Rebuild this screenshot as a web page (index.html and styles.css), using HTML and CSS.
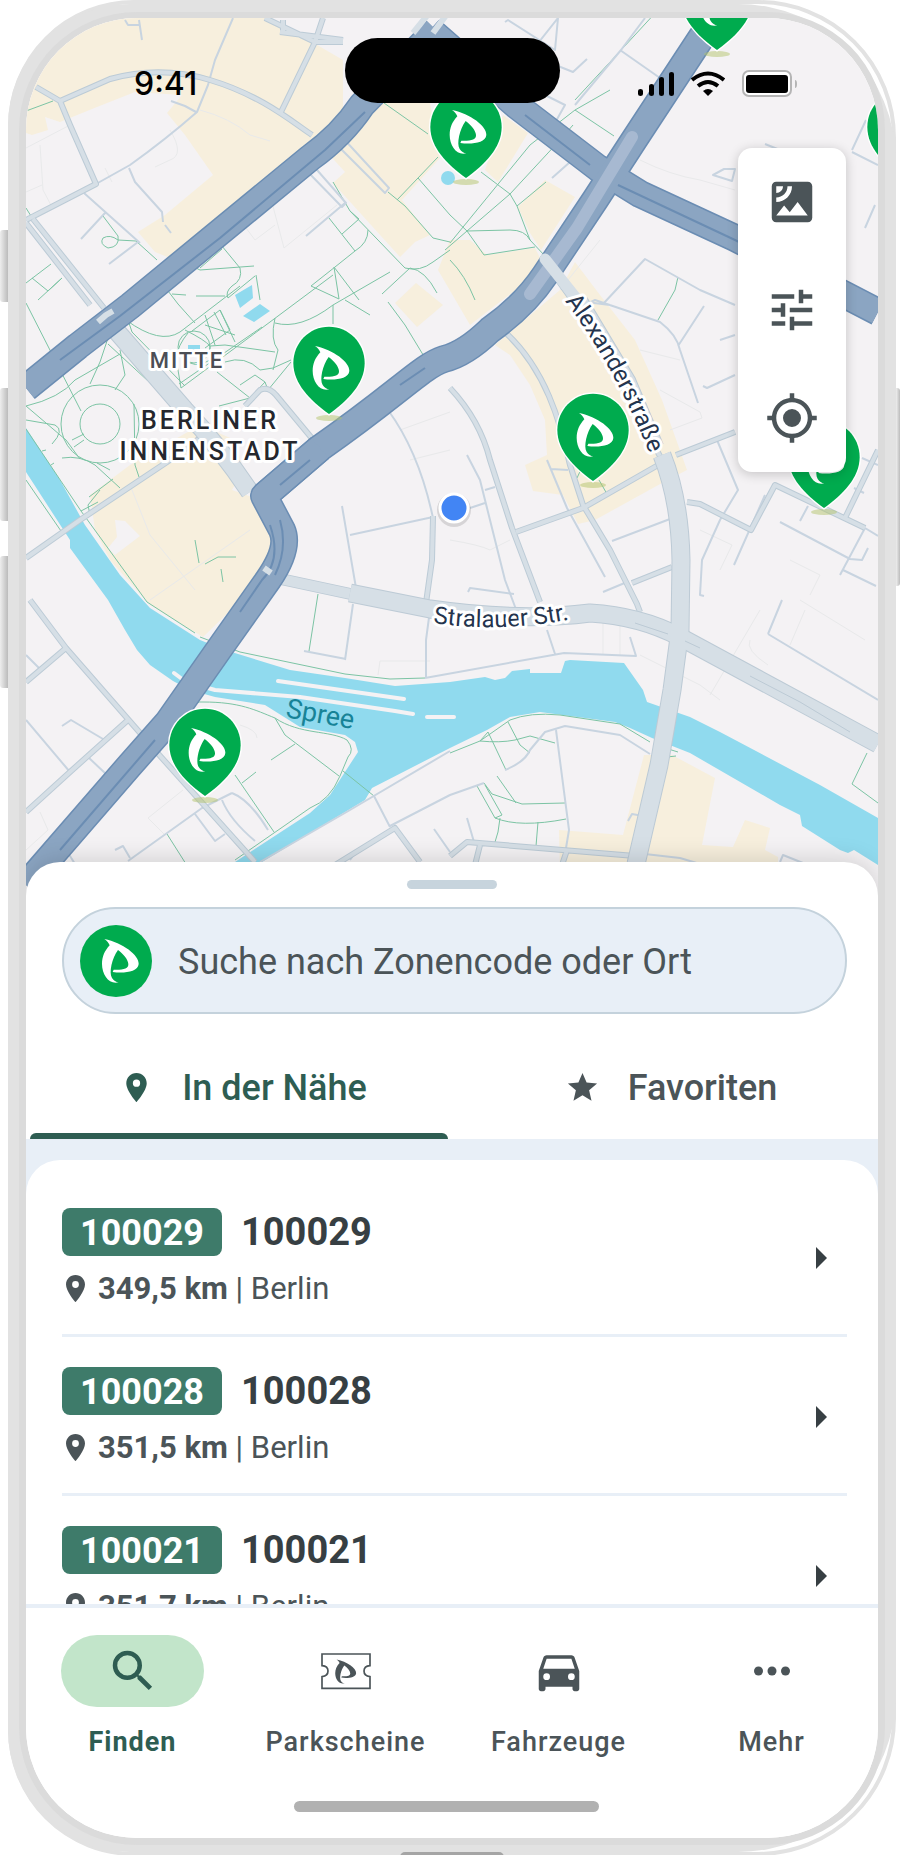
FILE: index.html
```html
<!DOCTYPE html>
<html lang="de">
<head>
    <meta charset="UTF-8">
    <meta name="viewport" content="width=device-width, initial-scale=1.0">
    <title>Parken in der Nähe</title>
    <link rel="stylesheet" href="styles.css">
</head>
<body>

    <svg class="sprite" aria-hidden="true">
        <defs>
            <path id="logo" d="M945 137C1000 148 1050 186 1048 212C1046 238 1000 240 970 236L973 229C1002 230 1018 226 1017 212C1016 198 1002 182 986 170C968 194 958 238 968 254C973 262 980 266 988 267C960 275 938 245 938 212C938 190 946 172 961 156C958 148 952 142 945 137Z"/>
            <g id="pin">
                <ellipse class="pin-shadow" cx="0" cy="4" rx="13" ry="3"/>
                <g transform="scale(.3333) translate(-987 -341)">
                    <path class="pin-body" d="M987 341C930 300 880 250 880 188C880 127 928 79 987 79C1046 79 1094 127 1094 188C1094 250 1044 300 987 341Z"/>
                    <use href="#logo" fill="#fff"/>
                </g>
            </g>
            <path id="place" d="M12 2C8.1 2 5 5.1 5 9c0 5.2 7 13 7 13s7-7.800 7-13c0-3.900-3.100-7-7-7zm0 9.500a2.500 2.500 0 1 1 0-5 2.500 2.500 0 0 1 0 5z"/>
            <path id="hw1" d="M436 30L362 105Q342 135 310 158L130 306L78 346L26 388"/>
            <path id="hw2" d="M430 30L517 106L598 168L640 194L735 238L878 312"/>
            <path id="hw3" d="M703 35L655 108L634 140L595 200L545 275Q525 305 490 330Q465 354 444 359C422 366 400 392 320 448L264 496"/>
            <path id="hw4" d="M320 448L264 496L282 530Q290 548 268 580L222 645L168 722L130 765L26 885"/>
            <path id="st1" d="M113 327L185 410Q220 447 250 492"/>
            <path id="st3" d="M350 593L430 609Q520 622 590 613Q640 616 680 637L878 744"/>
            <path id="st4" d="M662 455Q680 500 681 560L680 630L672 690L659 765L636 864"/>
            <path id="alex" d="M565 301Q614 366 648 450"/>
            <path id="stral" d="M433 623Q500 633 572 619"/>
        </defs>
    </svg>

    <div class="phone">
        <span class="side-button mute"></span>
        <span class="side-button volume-up"></span>
        <span class="side-button volume-down"></span>
        <span class="side-button power"></span>

        <main class="screen">
            <section class="map">
                <svg class="map-canvas" viewBox="26 18 852 890" role="img" aria-label="Karte von Berlin">
                    <rect x="26" y="18" width="852" height="890" fill="#f4f2f4"/>

                    <!-- built-up areas -->
                    <g class="area">
                        <path d="M26 18H265L300 35L343 60V108L320 140L180 262L155 252L138 232L165 215L213 175L185 135L167 113L182 95L135 92L97 107L60 122L45 117L48 130L32 135L26 133Z"/>
                        <path d="M325 150L375 103H430L440 158L402 200L430 235L415 242L400 257L333 183L345 172Z"/>
                        <path d="M503 115L528 133L498 182L485 170Z"/>
                        <path d="M545 180L575 197L541 250L530 233L518 207Z"/>
                        <path d="M438 270L450 240H470L487 255L535 248L545 268L505 298L470 325Z"/>
                        <path d="M395 303L416 283L443 305L417 327Z"/>
                        <path d="M495 345L560 290L575 262L600 295L635 340L662 400L687 470L662 483L595 520L578 524L563 495L533 491L525 465L547 455L545 420L530 385L510 355Z"/>
                        <path d="M90 495L130 465L200 425L235 440L243 470L232 490L260 500L290 540L262 580L203 637L150 605L110 560L95 530Z"/>
                        <path d="M644 755L672 755L715 778L702 845L733 847L745 820L770 828L765 850L778 857V875H560L559 830L623 835Z"/>
                    </g>
                    <path fill="#f4f2f4" d="M115 520L125 521L140 536L115 555L108 548L117 537Z"/>

                    <!-- faint footways -->
                    <g class="faint">
                        <path d="M26 148L70 125M40 145L43 190L52 207M26 192L42 185M170 130Q185 155 170 160L155 167M200 110Q230 118 250 135L270 141M105 168L112 182"/>
                        <path d="M270 195L284 248L337 205M240 220L255 240L275 225M600 240L560 290M640 160Q670 175 700 180L735 190"/>
                        <path d="M130 485L150 535L195 590M150 600L200 565L250 530M400 430L450 412M410 460L450 450M640 350L680 360M660 390L700 412L702 418L670 430"/>
                        <path d="M720 700L700 685L640 655M603 620V655M620 625V655M710 695L760 610M800 600L865 640M750 640Q745 650 768 665M790 645L805 610M700 530L732 545L720 570M790 560L820 575L810 595"/>
                        <path d="M378 675L380 661H430M240 725Q257 730 257 738M148 818L183 790M148 818L165 835M26 850L48 830L40 812M450 540Q480 545 490 550L510 540"/>
                    </g>

                    <!-- water -->
                    <g class="water">
                        <path d="M26 428L60 480L85 525L120 575L150 608L200 640L225 650L290 670L345 678L395 686L450 682L485 677L495 680L505 678L512 671L530 669V673H561L565 661L570 660L624 663L643 690L647 702L690 717L720 732L820 785L878 818V865L854 850L848 853L840 850L802 826L800 815L780 805L690 753L652 738L630 728L615 722L540 712L510 717L487 730L450 748L372 788L365 800L262 862H235L310 813L330 795L358 752L355 742L345 735L300 727L265 705L215 697L190 690L173 681L150 665L137 650L125 630L108 600L70 548V540L26 472Z"/>
                        <path d="M235 295L252 285L253 298L240 308ZM243 316L260 304L270 311L254 322ZM188 345H200V352H188Z"/>
                        <circle cx="448" cy="178" r="7"/>
                    </g>
                    <g class="quay">
                        <path d="M190 683L215 690L300 697L395 711L413 714M278 681L404 699M427 717H454M174 673L182 679"/>
                    </g>

                    <!-- park paths -->
                    <g class="park">
                        <path d="M384 103L428 134M26 111L53 101M26 208L31 216M103 216L118 236Q120 247 108 248Q99 244 103 238Q110 234 118 240L136 241L157 260M26 283L51 264M32 278L48 291L62 278M38 300L62 278"/>
                        <path d="M26 303L81 411M190 265L200 270L254 266M200 268L222 249M217 240L240 268Q243 280 232 286Q225 292 228 298M165 287L178 304L195 323M172 294L186 295M196 296H225M256 275L260 300M255 276L228 298"/>
                        <path d="M388 192L405 206L433 238L450 242M397 200L438 157M418 178L450 215M333 182L350 211L405 268Q420 272 433 262L450 250M350 211L359 219L342 234M329 218L355 251Q368 243 368 230M355 251L335 267L311 286L339 299L334 267L359 300M382 294L410 268Q425 270 437 293"/>
                        <path d="M126 320Q160 345 180 332L240 286M181 388L270 322L333 275M179 384L262 327M185 330Q205 340 210 346L225 345L275 352M188 333Q178 345 176 358L181 388M192 331L220 310L230 330L205 348M205 315L215 345M220 310L235 342M214 312L226 335M205 325L235 335M275 318Q270 340 278 350L273 370M275 323Q300 330 333 305L390 272M333 305V324M345 300L370 315M388 302L405 325L425 358"/>
                        <path d="M210 346V360Q195 370 182 358M217 372L250 398L219 406M225 362Q245 355 260 370L273 368L291 360M240 385L255 375L265 382L268 390L291 362M265 382L250 398"/>
                        <circle cx="100" cy="424" r="20"/>
                        <circle cx="100" cy="424" r="39"/>
                        <circle cx="194" cy="347" r="16"/>
                        <path d="M26 406Q60 398 75 380L120 354M26 420L55 425Q65 430 52 444M26 406L66 440L80 459M108 338L100 362L90 384M120 350L125 375L115 390M72 440L84 434M74 447L84 440M62 458Q80 455 95 465L120 488M97 463L110 470M100 490L88 505L90 515M134 404L135 465L139 477M89 497L113 479M26 429L81 511L147 602M26 480L61 531M42 451L46 450M51 465L54 463M81 511L98 502"/>
                        <path d="M128 320L132 332L185 386M108 344L174 405M195 540L199 563M205 564L218 557L236 557M221 569L223 582"/>
                        <path d="M147 602L195 633M200 637L240 652L345 674L390 679L425 678M318 594L309 651M226 635L235 643M175 707L184 712M191 708Q195 701 203 702C240 702 255 710 275 718C300 735 330 730 347 740Q355 750 348 757L340 776Q330 800 310 808L235 860M275 718L285 735L339 776M295 744L271 760M235 775L274 832M242 783L256 772M343 771L374 796M167 834L186 864"/>
                        <path d="M450 753L480 741L510 720Q530 712 560 715L620 724L650 742M480 741L488 732L506 770M480 741Q500 743 515 740L530 736L555 743M508 722L520 745L530 753M497 776L516 803M477 786L495 818L502 815L485 785M484 783L492 794L522 804L565 803M495 818Q520 828 566 819M500 818L498 832L495 842M538 822L536 846M665 748L678 752M667 757L676 756M867 753L852 784L878 803"/>
                        <path d="M575 100L658 10M610 90L575 110L530 145L450 243M575 110L614 136M573 125L560 140L510 194L517 206L530 240L545 256M481 172L510 194L467 231L445 250M517 206L546 182M450 215L467 231L510 230Q525 230 530 240M467 231L484 255L535 247M450 260Q465 275 475 300M678 277L675 290L658 320M577 478L583 465M599 480L607 494"/>
                    </g>

                    <!-- side streets -->
                    <g class="lane">
                        <path d="M125 20L128 25H140M139 20L142 40M233 18L215 60L208 85L197 112Q165 140 130 165L96 184M171 101L185 106L196 112M129 168L135 182L162 212L163 222M165 225L171 233M84 193L140 243M105 213L81 239M138 242L109 264M334 142L385 193L389 188L342 137M304 168L342 207L346 203L310 162M345 203L306 236"/>
                        <path d="M388 410C410 440 425 480 433 518M342 506L356 588M350 535L433 517M467 455L480 480L505 580L517 612M485 490L495 487M470 508L485 503M353 604L345 660M304 651L346 659M430 610L426 640V678M425 678L564 653L636 656L630 637M547 630L555 654"/>
                        <path d="M505 22L508 20L555 50L558 18M558 18L505 85M620 50L660 78M645 18L621 50L575 105M548 62L573 72L587 59M545 95L565 105L556 121M613 178L552 120M570 162L552 178M603 304L645 259L700 290L735 305M575 310L595 300L660 322Q677 335 680 350L698 403M704 306L678 346M703 386L707 388L735 375M586 302L610 305"/>
                        <path d="M547 460L567 508L605 577M551 469L568 470M612 541L670 519M603 592L627 582M468 592L470 588L514 594M717 440L738 490L720 520L702 560L700 595L704 596M765 495L734 565M780 522L850 559L862 560L868 548M843 570L876 586M808 506L800 521M862 458L878 465M854 488L864 493M865 528L840 575M768 634L782 600M768 634L878 700M735 335L720 340M865 528L878 536"/>
                        <path d="M26 655L40 669M62 726L71 720L103 739M26 720L70 772M88 757L106 774M128 861L202 808L232 793M195 814L215 841L225 834M222 800Q230 820 255 841M232 793Q250 800 268 830M115 850L123 846L130 858M65 848L75 864M260 862L350 810L450 751M374 796L390 827M434 829L450 852M390 826L450 795L484 783M350 860L357 850M505 770Q525 762 530 750L545 732L565 726L620 735L650 754M556 730L569 830L566 848M467 818L474 842M645 854L680 858L700 864M780 862L783 855L803 863M628 821L632 814L643 816"/>
                        <path d="M852 150L866 120M852 152L878 165M713 175L724 169H735L732 181ZM765 144L830 170M875 205L865 228"/>
                    </g>

                    <!-- streets -->
                    <g class="street-edge">
                        <path d="M36 87L60 101L110 79Q160 65 210 80C260 95 290 120 312 135M60 101L70 125L96 184L26 220M323 18L315 42L281 112M26 223L90 305M33 219L104 308M265 18L315 42H343M283 20L283 32M280 32L343 40"/>
                        <path d="M26 558L80 520L167 462L200 438M245 406L260 390Q268 386 276 395L315 442M507 334C545 370 560 420 570 465L583 505L610 550L637 604L640 612M450 388Q480 420 490 460L512 528L540 602M516 532L583 508L660 464M632 583L672 567M676 455L735 432M687 502L700 504L751 530L775 485L865 528M433 516L432 560L425 610M844 520L878 450"/>
                        <path d="M30 600L66 648L141 734M26 682L66 648M153 748L255 862M26 812L70 772L128 720M335 865L395 828L420 862M450 856L467 842L635 856M480 845L475 865M567 850L562 865"/>
                        <path d="M545 262L590 325L630 400L662 460"/>
                    </g>
                    <g class="street">
                        <path d="M36 87L60 101L110 79Q160 65 210 80C260 95 290 120 312 135M60 101L70 125L96 184L26 220M323 18L315 42L281 112M26 223L90 305M33 219L104 308M265 18L315 42H343M283 20L283 32M280 32L343 40"/>
                        <path d="M26 558L80 520L167 462L200 438M245 406L260 390Q268 386 276 395L315 442M507 334C545 370 560 420 570 465L583 505L610 550L637 604L640 612M450 388Q480 420 490 460L512 528L540 602M516 532L583 508L660 464M632 583L672 567M676 455L735 432M687 502L700 504L751 530L775 485L865 528M433 516L432 560L425 610M844 520L878 450"/>
                        <path d="M30 600L66 648L141 734M26 682L66 648M153 748L255 862M26 812L70 772L128 720M335 865L395 828L420 862M450 856L467 842L635 856M480 845L475 865M567 850L562 865"/>
                        <path d="M545 262L590 325L630 400L662 460"/>
                    </g>
                    <path class="mid-edge" d="M276 578L360 596M582 300L630 380L658 446"/>
                    <path class="mid-street" d="M276 578L360 596M582 300L630 380L658 446"/>
                    <g class="main-edge"><use href="#st1"/><use href="#st3"/><use href="#st4"/></g>
                    <g class="main-street"><use href="#st1"/><use href="#st3"/><use href="#st4"/></g>
                    <path class="seam" d="M635 623L668 634M685 641L700 648M750 676L800 702L850 732"/>

                    <!-- federal roads -->
                    <g class="road-edge"><use href="#hw1"/><use href="#hw2"/><use href="#hw3"/><use href="#hw4"/></g>
                    <g class="road"><use href="#hw1"/><use href="#hw2"/><use href="#hw3"/><use href="#hw4"/></g>
                    <g class="road-line">
                        <path d="M365 112L325 150L220 238L120 316L60 360M618 185L735 240L800 272M525 115L590 165M280 520Q288 548 275 575M270 525Q282 560 262 580L240 612M155 740L60 850M310 460L280 485M400 385L425 368"/>
                    </g>
                    <path class="tunnel" d="M632 137L577 228L530 294"/>
                    <path class="ramp" d="M545 259L584 308"/>
                    <path class="crossing" d="M98 322L106 315L113 311M264 568L271 573M413 33L430 12M433 33L450 10"/>

                    <!-- place names -->
                    <g class="map-label">
                        <text class="district" x="187" y="368">MITTE</text>
                        <text class="city" x="210" y="429">BERLINER</text>
                        <text class="city" x="210" y="460">INNENSTADT</text>
                        <text class="street-name"><textPath href="#alex">Alexanderstraße</textPath></text>
                        <text class="street-name"><textPath href="#stral">Stralauer Str.</textPath></text>
                        <text class="river" transform="translate(285 717) rotate(10)">Spree</text>
                    </g>

                    <circle class="me-shadow" cx="454" cy="510" r="17"/>
                    <circle class="me" cx="454" cy="508" r="14"/>

                    <use href="#pin" x="466" y="178"/>
                    <use href="#pin" x="717" y="50"/>
                    <use href="#pin" x="903" y="178"/>
                    <use href="#pin" x="329" y="414"/>
                    <use href="#pin" x="593" y="481"/>
                    <use href="#pin" x="824" y="508"/>
                    <use href="#pin" x="205" y="796"/>
                </svg>

                <div class="status-bar">
                    <span class="clock">9:41</span>
                    <span class="island"></span>
                    <span class="status-icons">
                        <svg width="36" height="26" viewBox="0 0 36 26"><path d="M0 20q0-2 2.500-2t2.500 2v3q0 2-2.500 2t-2.500-2zM11 15q0-2 2.500-2t2.500 2v8q0 2-2.500 2t-2.500-2zM21 8q0-2 2.500-2t2.500 2v15q0 2-2.500 2t-2.500-2zM31 3q0-2 2.500-2t2.500 2v20q0 2-2.500 2t-2.500-2z"/></svg>
                        <svg width="34" height="26" viewBox="0 0 34 26"><path fill="none" stroke="#000" stroke-width="4" d="M1 9q16-13 32 0M7 15q10-8 20 0"/><path d="M12 20q5-4 10 0l-5 5z"/></svg>
                        <svg width="56" height="28" viewBox="0 0 56 28"><rect x="1" y="1" width="48" height="25" rx="6" fill="#fff" stroke="#b5b5b5" stroke-width="2"/><rect x="4" y="5" width="42" height="18" rx="3"/><path fill="#b5b5b5" d="M53 10q2 0 2 4t-2 4z"/></svg>
                    </span>
                </div>

                <div class="map-tools">
                    <button type="button" aria-label="Satellitenansicht">
                        <svg viewBox="0 0 24 24"><path d="M19 3H5c-1.100 0-2 .9-2 2v14c0 1.100.9 2 2 2h14c1.100 0 2-.9 2-2V5c0-1.100-.9-2-2-2zM5 5h3c0 1.660-1.340 3-3 3V5zm0 5c2.760 0 5-2.240 5-5h2c0 3.870-3.130 7-7 7v-2zm0 8l3.500-4.500 2.500 3 3.500-4.500 4.500 6H5z"/></svg>
                    </button>
                    <button type="button" aria-label="Filter">
                        <svg viewBox="0 0 24 24"><path d="M3 17v2h6v-2H3zM3 5v2h10V5H3zm10 16v-2h8v-2h-8v-2h-2v6h2zM7 9v2H3v2h4v2h2V9H7zm14 4v-2H11v2h10zm-6-4h2V7h4V5h-4V3h-2v6z"/></svg>
                    </button>
                    <button type="button" aria-label="Mein Standort">
                        <svg viewBox="0 0 24 24"><path d="M12 8a4 4 0 1 0 0 8 4 4 0 0 0 0-8zm8.940 3A8.990 8.990 0 0 0 13 3.060V1h-2v2.060A8.990 8.990 0 0 0 3.060 11H1v2h2.060A8.990 8.990 0 0 0 11 20.940V23h2v-2.060A8.990 8.990 0 0 0 20.940 13H23v-2h-2.060zM12 19a7 7 0 1 1 0-14 7 7 0 0 1 0 14z"/></svg>
                    </button>
                </div>
            </section>

            <section class="sheet">
                <span class="handle"></span>
                <label class="search">
                    <svg class="search-logo" viewBox="872 95 216 216"><circle cx="980" cy="203" r="108" fill="#00ab4e"/><use href="#logo" fill="#fff"/></svg>
                    <input type="text" placeholder="Suche nach Zonencode oder Ort" aria-label="Suche nach Zonencode oder Ort">
                </label>

                <div class="tabs" role="tablist">
                    <button class="tab active" type="button" role="tab" aria-selected="true">
                        <svg viewBox="0 0 24 24"><use href="#place"/></svg>
                        In der Nähe
                    </button>
                    <button class="tab" type="button" role="tab" aria-selected="false">
                        <svg viewBox="0 0 24 24"><path d="M12 17.270L18.180 21l-1.640-7.030L22 9.240l-7.190-.61L12 2 9.190 8.630 2 9.240l5.460 4.730L5.820 21z"/></svg>
                        Favoriten
                    </button>
                </div>

                <div class="results">
                    <ul class="zones">
                        <li class="zone">
                            <div>
                                <p class="zone-title"><span class="badge">100029</span>100029</p>
                                <p class="zone-info"><svg viewBox="5 2 14 20"><use href="#place"/></svg><span><b>349,5 km</b> | Berlin</span></p>
                            </div>
                            <svg class="arrow" viewBox="0 0 11 22"><path d="M0 0L11 11L0 22Z"/></svg>
                        </li>
                        <li class="zone">
                            <div>
                                <p class="zone-title"><span class="badge">100028</span>100028</p>
                                <p class="zone-info"><svg viewBox="5 2 14 20"><use href="#place"/></svg><span><b>351,5 km</b> | Berlin</span></p>
                            </div>
                            <svg class="arrow" viewBox="0 0 11 22"><path d="M0 0L11 11L0 22Z"/></svg>
                        </li>
                        <li class="zone">
                            <div>
                                <p class="zone-title"><span class="badge">100021</span>100021</p>
                                <p class="zone-info"><svg viewBox="5 2 14 20"><use href="#place"/></svg><span><b>351,7 km</b> | Berlin</span></p>
                            </div>
                            <svg class="arrow" viewBox="0 0 11 22"><path d="M0 0L11 11L0 22Z"/></svg>
                        </li>
                    </ul>
                </div>
            </section>

            <nav class="bottom-nav">
                <a class="nav-item current" href="#finden">
                    <span class="nav-icon"><svg viewBox="0 0 24 24"><path d="M15.500 14h-.79l-.28-.27A6.470 6.470 0 0 0 16 9.500 6.500 6.500 0 1 0 9.500 16c1.610 0 3.090-.59 4.230-1.570l.27.28v.79l5 4.990L20.490 19l-4.990-5zm-6 0a4.500 4.500 0 1 1 0-9 4.500 4.500 0 0 1 0 9z"/></svg></span>
                    Finden
                </a>
                <a class="nav-item" href="#parkscheine">
                    <span class="nav-icon"><svg viewBox="-6 -27 162 162"><path fill="none" stroke="#4b5458" stroke-width="5" d="M3 3H147V38C123 40 123 68 147 71V106H3V71C27 68 27 40 3 38Z"/><g transform="translate(-492 -56) scale(.57 .55)"><use href="#logo"/></g></svg></span>
                    Parkscheine
                </a>
                <a class="nav-item" href="#fahrzeuge">
                    <span class="nav-icon"><svg viewBox="0 0 24 24"><path d="M18.920 6.010C18.720 5.420 18.160 5 17.500 5h-11c-.66 0-1.210.42-1.420 1.010L3 12v8c0 .55.45 1 1 1h1c.55 0 1-.45 1-1v-1h12v1c0 .55.45 1 1 1h1c.55 0 1-.45 1-1v-8l-2.080-5.990zM6.500 16a1.500 1.500 0 1 1 0-3 1.500 1.500 0 0 1 0 3zm11 0a1.500 1.500 0 1 1 0-3 1.500 1.500 0 0 1 0 3zM5 11l1.500-4.500h11L19 11H5z"/></svg></span>
                    Fahrzeuge
                </a>
                <a class="nav-item" href="#mehr">
                    <span class="nav-icon"><svg viewBox="0 0 24 24"><circle cx="6" cy="12" r="2"/><circle cx="12" cy="12" r="2"/><circle cx="18" cy="12" r="2"/></svg></span>
                    Mehr
                </a>
                <span class="home-bar"></span>
            </nav>
        </main>
    </div>

</body>
</html>
```
FILE: styles.css
```css
* {
    box-sizing: border-box;
}

body {
    margin: 0;
    background: #fff;
    color: #4b5458;
    font-family: Roboto, "Liberation Sans", sans-serif;
    overflow: hidden;
}

button, input {
    font-family: inherit;
    color: inherit;
    border: none;
    background: none;
    padding: 0;
}

svg {
    display: block;
    fill: currentColor;
}

.sprite {
    position: absolute;
    width: 0;
    height: 0;
}

/* phone */
.phone {
    position: relative;
    height: calc(100vh - 7px);
    max-width: 888px;
    margin: 4px 4px 3px 8px;
    padding: 8px 11px 7px;
    background: #e2e2e2;
    border-radius: 122px 158px 158px 122px;
}

.phone::before {
    content: "";
    position: absolute;
    inset: -4px 0 -4px 0;
    border: 4px solid #e2e2e2;
    border-radius: 126px 138px 138px 126px;
    z-index: -1;
}

.phone::after {
    content: "";
    position: absolute;
    left: 392px;
    bottom: -5px;
    width: 104px;
    height: 5px;
    background: #a5a5a5;
    border-radius: 5px 5px 0 0;
}

.side-button {
    position: absolute;
    left: -8px;
    width: 8px;
    background: linear-gradient(90deg, #eee, #bbb);
    border-radius: 3px 0 0 3px;
}

.mute {
    top: 226px;
    height: 72px;
}

.volume-up {
    top: 384px;
    height: 133px;
}

.volume-down {
    top: 552px;
    height: 132px;
}

.power {
    left: auto;
    right: -4px;
    width: 4px;
    top: 384px;
    height: 198px;
    border-radius: 0 3px 3px 0;
}

.screen {
    display: flex;
    flex-direction: column;
    height: 100%;
    background: #fff;
    border: 7px solid #dbdbdb;
    border-top-width: 6px;
    border-radius: 118px;
    overflow: hidden;
}

/* map */
.map {
    position: relative;
    flex: none;
}

.map-canvas {
    width: 100%;
}

.area {
    fill: #f7efdd;
}

.water {
    fill: #90daee;
}

.faint, .quay, .park, .lane, .street-edge, .street, .mid-edge, .mid-street,
.main-edge, .main-street, .road-edge, .road, .road-line, .seam, .tunnel,
.ramp, .crossing {
    fill: none;
    stroke-linejoin: round;
}

.faint {
    stroke: #e8e9ea;
    stroke-width: 1;
}

.quay {
    stroke: #f4f2f4;
    stroke-width: 4;
    stroke-linecap: round;
}

.park {
    stroke: #7cc4a4;
    stroke-width: 1;
}

.lane {
    stroke: #c8d4e0;
    stroke-width: 2;
}

.street-edge {
    stroke: #bccbd6;
    stroke-width: 6;
}

.street {
    stroke: #d6dfe6;
    stroke-width: 4;
}

.mid-edge {
    stroke: #bccad5;
    stroke-width: 12;
}

.mid-street {
    stroke: #d6dfe6;
    stroke-width: 10;
}

.main-edge {
    stroke: #bccad5;
    stroke-width: 19;
}

.main-street {
    stroke: #d6dfe6;
    stroke-width: 17;
}

.seam {
    stroke: #bccad5;
    stroke-width: 1;
}

.road-edge {
    stroke: #6b8db3;
    stroke-width: 28;
}

.road {
    stroke: #8ba5c2;
    stroke-width: 25;
}

.road-line {
    stroke: #6b8db3;
    stroke-width: 2;
}

.tunnel {
    stroke: #a7b9d1;
    stroke-width: 12;
    stroke-linecap: round;
}

.ramp {
    stroke: #d6dfe6;
    stroke-width: 11;
    stroke-linecap: round;
}

.crossing {
    stroke: #d6dfe6;
    stroke-width: 6;
}

.map-label text {
    font-family: Roboto, "Liberation Sans", sans-serif;
    stroke: #fff;
    stroke-width: 6px;
    stroke-linejoin: round;
    paint-order: stroke;
}

.map-label .district {
    font-size: 22px;
    font-weight: 500;
    letter-spacing: 2px;
    text-anchor: middle;
    fill: #4b4e55;
}

.map-label .city {
    font-size: 25px;
    font-weight: 500;
    letter-spacing: 3px;
    text-anchor: middle;
    fill: #25272d;
}

.map-label .street-name {
    font-size: 24px;
    fill: #24344d;
}

.map-label .river {
    font-size: 27px;
    fill: #178397;
    stroke: none;
}

.pin-body {
    fill: #00ab4e;
    stroke: #fff;
    stroke-width: 9;
    paint-order: stroke;
}

.pin-shadow {
    fill: #b4c46c;
    opacity: .5;
}

.me {
    fill: #4285f4;
    stroke: #fff;
    stroke-width: 3;
}

.me-shadow {
    fill: #000;
    opacity: .12;
}

.status-bar {
    position: absolute;
    top: 20px;
    left: 0;
    right: 0;
    display: grid;
    grid-template-columns: 1fr 215px 1fr;
    align-items: center;
    color: #000;
}

.clock {
    padding: 26px 0 0 108px;
    font: 500 32px/36px Inter, "Liberation Sans", sans-serif;
}

.island {
    height: 65px;
    background: #000;
    border-radius: 33px;
}

.status-icons {
    display: flex;
    justify-content: flex-end;
    align-items: center;
    gap: 17px;
    padding: 26px 80px 0 0;
}

.map-tools {
    position: absolute;
    top: 130px;
    right: 32px;
    display: flex;
    flex-direction: column;
    width: 108px;
    background: #fff;
    border-radius: 14px;
    box-shadow: 0 2px 12px rgba(0, 0, 0, .2);
}

.map-tools button {
    display: flex;
    justify-content: center;
    align-items: center;
    height: 108px;
    cursor: pointer;
}

.map-tools svg {
    width: 54px;
}

/* bottom sheet */
.sheet {
    position: relative;
    flex: 1;
    min-height: 0;
    display: flex;
    flex-direction: column;
    margin-top: -46px;
    background: #fff;
    border-radius: 34px 34px 0 0;
    box-shadow: 0 -2px 24px rgba(0, 0, 0, .15);
}

.handle {
    align-self: center;
    width: 90px;
    height: 9px;
    margin: 18px 0;
    background: #c7d4dd;
    border-radius: 5px;
}

.search {
    display: flex;
    align-items: center;
    gap: 26px;
    height: 107px;
    margin: 0 31px 0 36px;
    padding: 0 16px;
    background: #e8eff7;
    border: 2px solid #c4d2dc;
    border-radius: 54px;
}

.search-logo {
    flex: none;
    width: 72px;
}

.search input {
    flex: 1;
    min-width: 0;
    padding-top: 2px;
    font-size: 36px;
    outline: none;
}

.search input::placeholder {
    color: #4b5458;
    opacity: 1;
}

.tabs {
    display: flex;
    height: 125px;
}

.tab {
    position: relative;
    flex: 1;
    display: flex;
    justify-content: center;
    align-items: center;
    gap: 28px;
    padding: 22px 0 0 14px;
    font-size: 36px;
    font-weight: 500;
    cursor: pointer;
}

.tab svg {
    width: 35px;
}

.tab.active {
    padding-left: 10px;
    color: #2e5d52;
}

.tab.active::after {
    content: "";
    position: absolute;
    left: 4px;
    right: 2px;
    bottom: 0;
    height: 6px;
    background: #2e5d52;
    border-radius: 6px 6px 0 0;
}

.results {
    flex: 1;
    min-height: 0;
    padding-top: 21px;
    background: #e8eff7;
    overflow: hidden;
}

.zones {
    margin: 0;
    padding: 18px 31px 0 36px;
    list-style: none;
    background: #fff;
    border-radius: 34px 34px 0 0;
}

.zone {
    display: flex;
    justify-content: space-between;
    align-items: center;
    padding: 30px 20px 26px 0;
    border-bottom: 3px solid #e8eff7;
}

.zone p {
    margin: 0;
}

.zone .zone-title {
    display: flex;
    align-items: center;
    gap: 19px;
    height: 48px;
    margin-bottom: 13px;
    font-size: 38px;
    font-weight: 700;
    line-height: 51px;
    color: #373f43;
}

.badge {
    width: 160px;
    height: 48px;
    background: #3e7b6a;
    border-radius: 8px;
    color: #fff;
    font-size: 36px;
    text-align: center;
}

.zone-info {
    display: flex;
    align-items: center;
    gap: 13px;
    padding-left: 4px;
    font-size: 31px;
    line-height: 39px;
}

.zone-info svg {
    width: 19px;
}

.arrow {
    width: 11px;
    fill: #373f43;
}

/* bottom navigation */
.bottom-nav {
    position: relative;
    flex: none;
    display: flex;
    height: 234px;
    padding-top: 27px;
    background: #fff;
    border-top: 4px solid #e8eff7;
}

.nav-item {
    flex: 1;
    display: flex;
    flex-direction: column;
    align-items: center;
    gap: 18px;
    color: inherit;
    font-size: 27px;
    font-weight: 500;
    line-height: 34px;
    letter-spacing: 1px;
    text-decoration: none;
}

.nav-icon {
    display: flex;
    justify-content: center;
    align-items: center;
    width: 143px;
    height: 72px;
    border-radius: 36px;
}

.nav-icon svg {
    width: 54px;
}

.nav-item.current {
    color: #2e5d52;
    font-weight: 700;
}

.current .nav-icon {
    background: #c2e5ca;
}

.home-bar {
    position: absolute;
    left: 50%;
    bottom: 26px;
    width: 305px;
    height: 11px;
    margin-left: -158px;
    background: #b1b1b1;
    border-radius: 6px;
}
```
